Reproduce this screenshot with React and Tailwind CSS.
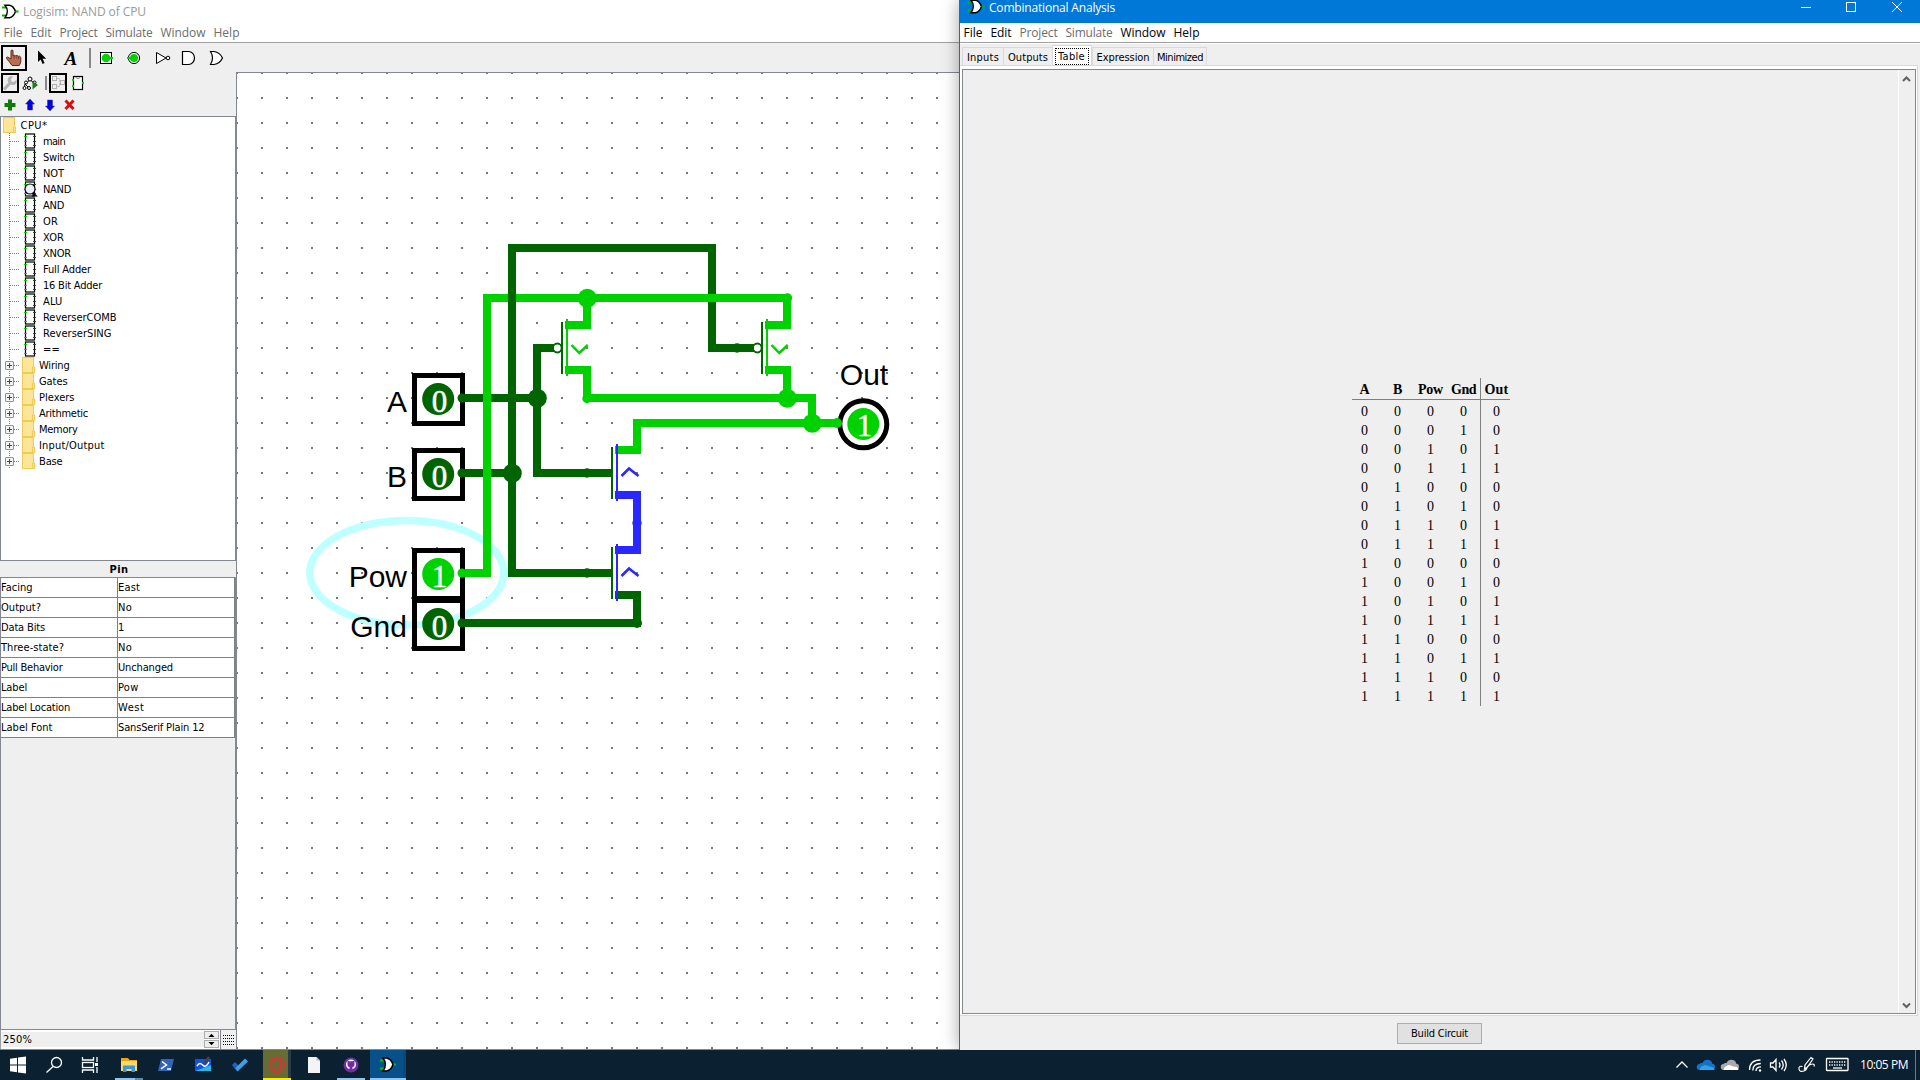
import { useLayoutEffect, useRef } from "react";

const UI = "font-['DejaVu_Sans_Condensed','DejaVu_Sans',sans-serif] text-[11px]";
const SEGOE = "font-['Open_Sans',sans-serif] text-[12px]";

// Text run whose tracking is adjusted so that it spans exactly `w` pixels.
function Fit({ w, children, className = "" }) {
  const ref = useRef(null);
  useLayoutEffect(() => {
    const el = ref.current;
    const apply = () => {
      el.style.letterSpacing = "0px";
      const natural = el.getBoundingClientRect().width;
      el.style.letterSpacing = (w - natural) / String(children).length + "px";
    };
    apply();
    document.fonts?.ready.then(apply);
  }, [w, children]);
  return (
    <span ref={ref} className={"inline-block whitespace-pre " + className}>
      {children}
    </span>
  );
}

const DARK = "#006400";
const LIT = "#00d200";
const BLUE = "#2828ff";

function LogisimIcon() {
  return (
    <svg width="17" height="16" viewBox="0 0 17 16" className="block shrink-0">
      <path d="M0 3.500h5M0 11.500h5" stroke="#00b400" strokeWidth="2" />
      <path d="M3 1.200h4.500c3 0.500 5 3.500 6 6.300c-1 2.800-3 5.800-6 6.300H3c3-4 3-9 0-12.600z" fill="#fff" stroke="#000" strokeWidth="1.500" />
      <path d="M13.500 7.500h3" stroke="#00b400" strokeWidth="2" />
    </svg>
  );
}

const MENU = [["File", 19], ["Edit", 21], ["Project", 38], ["Simulate", 47], ["Window", 45], ["Help", 26]];

function MenuBar({ dim }) {
  return (
    <div className={"flex h-[19px] items-center gap-[8px] pl-[3.500px] " + SEGOE}>
      {MENU.map(([m, w]) => (
        <Fit key={m} w={w} className={dim(m) ? "text-[#6d6d6d]" : "text-black"}>{m}</Fit>
      ))}
    </div>
  );
}

function ToolBar() {
  return (
    <div className="flex h-[29px] items-start bg-[#efefef] pl-px pt-[2px]">
      <div className="flex size-[26px] items-center justify-center border-2 border-black">
        <svg width="18" height="18" viewBox="0 0 18 18">
          <path d="M6 1.500q1-1 2 0V7l1.200-0.800 1.500 0.600 1.200-0.400 1.300 0.900 1.300-0.200 1.300 1.200V13l-1.500 3.500H7L4.500 13 1.500 9.500q-0.500-1.500 1-1.500L6 10z" fill="#b96d50" stroke="#5f2c1a" strokeWidth="1" />
          <path d="M9.200 7v2.500M11.500 7.500v2M13.500 8v2" stroke="#5f2c1a" strokeWidth="0.700" />
        </svg>
      </div>
      <svg width="200" height="26" viewBox="27 45 200 26" className="block">
        <path d="M38 50.500V62l2.600-2.400 2 4.400 2-0.900-2-4.300h3.600z" fill="#000" />
        <text x="64.500" y="65" fontFamily="Liberation Serif" fontSize="19" fontWeight="bold" fontStyle="italic">A</text>
        <path d="M90 48V68" stroke="#888" strokeWidth="2" />
        <rect x="100.500" y="52.500" width="11" height="11" fill="#fff" stroke="#000" />
        <circle cx="106" cy="58" r="4.300" fill={LIT} /><path d="M109 58h4" stroke={LIT} strokeWidth="2" />
        <circle cx="134" cy="58" r="5.600" fill="#fff" stroke="#000" />
        <circle cx="134" cy="58" r="4" fill={LIT} /><path d="M127 58h4" stroke={LIT} strokeWidth="2" />
        <path d="M156.500 52.500V63.500L166 58z" fill="#fff" stroke="#000" />
        <circle cx="168" cy="58" r="1.800" fill="#fff" stroke="#000" />
        <path d="M182.500 51.500h6a6 6.500 0 0 1 0 13h-6z" fill="#fff" stroke="#000" strokeWidth="1.200" />
        <path d="M210.500 51.500h3.500q6 1 8.500 6.500q-2.500 5.500-8.500 6.500h-3.500q4-6.500 0-13z" fill="#fff" stroke="#000" strokeWidth="1.200" />
      </svg>
    </div>
  );
}

function ExplorerBars() {
  return (
    <svg width="236" height="44" viewBox="0 72 236 44" className="block bg-[#efefef]">
      <rect x="2" y="74" width="16" height="18" fill="none" stroke="#000" strokeWidth="2" />
      <path d="M4 89.500L11 82" stroke="#b4b4b4" strokeWidth="3.200" />
      <path d="M13.500 76.500l-2.500 2.500 0.500 2.500 2.500 0.500 2.500-2.500q1 3.500-1.500 5t-5-0.500l-2-2q-1-2.500 0.500-4.500t5-1z" fill="#b4b4b4" />
      <g fill="#fff" stroke="#000">
        <path d="M30 80L25 84L24 89M30 80l6 4M25 84l4 4" fill="none" />
        <circle cx="30" cy="79" r="2" /><circle cx="26" cy="82.500" r="1.500" /><circle cx="34.500" cy="82.500" r="1.500" />
        <circle cx="24.500" cy="88" r="1.500" /><circle cx="29" cy="88" r="1.500" />
      </g>
      <path d="M32.500 81V89.500L38 85z" fill="#1e7d1e" />
      <path d="M46 76V90" stroke="#888" strokeWidth="2" />
      <rect x="50" y="74" width="16" height="18" fill="none" stroke="#000" strokeWidth="2" />
      <g fill="none" stroke="#b0b0b0">
        <rect x="52.500" y="76.500" width="4" height="4" /><rect x="52.500" y="84.500" width="4" height="4" /><rect x="60.500" y="80.500" width="4" height="4" />
      </g>
      <path d="M57 78.500h2.500v3.500M57 86.500h2.500V83" fill="none" stroke="#a4dba4" />
      <rect x="73.500" y="76.500" width="9" height="13" fill="#fff" stroke="#000" strokeWidth="1.200" />
      <path d="M76 77a2 1.500 0 0 0 4 0" fill="none" stroke="#888" />
      <path d="M72 80h2M72 86h2M82 83h2" stroke={LIT} strokeWidth="2" />
      <path d="M8 99.500h4v3.500h3.500v4H12v3.500H8V107H4.500v-4H8z" fill="#0b7d0b" />
      <path d="M30 99l4.500 5H32.500v6h-5v-6H25.500z" fill="#0000e6" stroke="#333a80" strokeWidth="0.500" />
      <path d="M50 111l-4.500-5h2v-6h5v6h2z" fill="#0000e6" stroke="#333a80" strokeWidth="0.500" />
      <path d="M65.500 100.500l8 8.500M73.500 100.500l-8 8.500" stroke="#e00a0a" strokeWidth="3" />
    </svg>
  );
}

function Chip({ viewed }) {
  return (
    <svg width="15" height="16" viewBox="0 0 15 16" className="block shrink-0">
      <rect x="1.500" y="1" width="9" height="14" fill="#fff" stroke="#000" strokeWidth="1.200" />
      <path d="M0 3.500h3M0 8.500h3M0 12.500h3" stroke={LIT} strokeWidth="1" />
      <path d="M9 3.500h3M9 8.500h3M9 12.500h3" stroke="#006400" strokeWidth="1" />
      {viewed && <circle cx="6" cy="8" r="5" fill="#eeeeff" stroke="#000" strokeWidth="1.100" />}
      {viewed && <path d="M9 11L14 15.500H8z" fill="#000" />}
    </svg>
  );
}

function Folder() {
  return (
    <svg width="13" height="16" viewBox="0 0 13 16" className="block shrink-0">
      <rect x="0.500" y="0.500" width="11" height="15" fill="#ffe597" stroke="#eecb55" />
      <path d="M10.500 15.500V10h2v5.500z" fill="#ffe597" stroke="#eecb55" />
    </svg>
  );
}

function Branch({ box }) {
  return (
    <svg width="21" height="16" viewBox="0 0 21 16" className="block shrink-0">
      <path d="M9.500 0V16" stroke="#808080" strokeDasharray="1 1" />
      <path d="M10 8.500H20" stroke="#808080" strokeDasharray="1 1" />
      {box && <rect x="5.500" y="4.500" width="8" height="8" rx="0.500" fill="#f2f2f2" stroke="#919191" />}
      {box && <path d="M7 8.500h5M9.500 6v5" stroke="#2c4a94" />}
    </svg>
  );
}

const CIRCUITS = [["main", 22], ["Switch", 31.5], ["NOT", 21], ["NAND", 28], ["AND", 21], ["OR", 15], ["XOR", 21], ["XNOR", 28],
  ["Full Adder", 48], ["16 Bit Adder", 59], ["ALU", 19.5], ["ReverserCOMB", 73.5], ["ReverserSING", 68.5], ["==", 17]];
const LIBS = [["Wiring", 30.5], ["Gates", 28.5], ["Plexers", 35.5], ["Arithmetic", 49], ["Memory", 38.5], ["Input/Output", 65.5], ["Base", 23.5]];

function Tree() {
  return (
    <div className={"h-[445px] border border-[#828790] bg-white " + UI}>
      <div className="flex h-4 items-center pl-[2px]"><Folder /><Fit w={27} className="ml-[4.500px] pt-[2px]">CPU*</Fit></div>
      {CIRCUITS.map(([n, w]) => (
        <div key={n} className="-ml-px flex h-4 items-center">
          <Branch />
          <div className="ml-[3px] flex"><Chip viewed={n === "NAND"} /></div>
          <Fit w={w} className="ml-[4px] pt-[2px]">{n}</Fit>
        </div>
      ))}
      {LIBS.map(([n, w]) => (
        <div key={n} className="-ml-px flex h-4 items-center">
          <Branch box />
          <div className="ml-[1px]"><Folder /></div>
          <Fit w={w} className="ml-[4px] pt-[2px]">{n}</Fit>
        </div>
      ))}
    </div>
  );
}

const ATTRS = [["Facing", 31.5, "East", 22], ["Output?", 40, "No", 14], ["Data Bits", 44, "1", 7], ["Three-state?", 63, "No", 14],
  ["Pull Behavior", 61.5, "Unchanged", 55], ["Label", 26, "Pow", 20.5], ["Label Location", 69, "West", 26.5], ["Label Font", 51.5, "SansSerif Plain 12", 86.5]];

function Attributes() {
  return (
    <div className={UI}>
      <div className="flex h-4 items-center justify-center pt-[2px] pl-[2px] font-bold"><Fit w={19}>Pin</Fit></div>
      <div className="h-[453px] border border-[#828790] bg-[#efefef]">
        {ATTRS.map(([k, kw, v, vw]) => (
          <div key={k} className="flex h-5 items-start border-b border-r border-[#808080] bg-white">
            <div className="flex h-[19px] w-[117px] items-center border-r border-[#808080] pt-[2px]"><Fit w={kw}>{k}</Fit></div>
            <div className="flex h-[19px] items-center pt-[2px]"><Fit w={vw}>{v}</Fit></div>
          </div>
        ))}
      </div>
    </div>
  );
}

function ZoomBar() {
  return (
    <div className={"flex h-[19px] items-center border-l border-[#a0a0a0] bg-[#efefef] " + UI}>
      <div className="flex h-full w-[203px] shrink-0 items-center border-y-2 border-white pt-[2px] pl-[2px]"><Fit w={29}>250%</Fit></div>
      <svg width="32" height="19" viewBox="204 1030 32 19" className="block shrink-0">
        <rect x="204" y="1030" width="16" height="19" fill="#fff" />
        <rect x="204.500" y="1031.500" width="14" height="7" fill="#eee" stroke="#acacac" />
        <rect x="204.500" y="1040.500" width="14" height="7" fill="#eee" stroke="#acacac" />
        <path d="M208.500 1037h6l-3-3.200zM208.500 1042h6l-3 3.200z" fill="#000" />
        <path d="M220.500 1030V1049" stroke="#828790" />
        {[0, 1, 2, 3].map((r) => (
          <path key={r} d={`M223 ${1035.5 + r * 3}H234`} stroke="#000" strokeDasharray="1 1" />
        ))}
      </svg>
    </div>
  );
}

function Pin({ y, bit, label }) {
  return (
    <g>
      <rect x="414.500" y={y - 22.5} width="48" height="48" fill="none" stroke="#000" strokeWidth="5" />
      <circle cx="438.200" cy={y + 1} r="16" fill={bit ? LIT : DARK} />
      <text x="439.500" y={y + 13.5} textAnchor="middle" fontFamily="Liberation Serif" fontSize="31" fill="#fff" stroke="#fff" strokeWidth="0.500">{bit}</text>
      <circle cx="462" cy={y} r="4.500" fill={bit ? LIT : DARK} />
      <text x="407" y={y + 14} textAnchor="end" fontFamily="Liberation Sans" fontSize="30">{label}</text>
    </g>
  );
}

function PType({ dx }) {
  return (
    <g transform={`translate(${dx} 0)`} fill="none">
      <path d="M565 325H587V298M565 370H587V398" stroke={LIT} strokeWidth="8" />
      <path d="M562 322V374" stroke={DARK} strokeWidth="2" />
      <path d="M567 319V376" stroke={LIT} strokeWidth="2" />
      <circle cx="557.300" cy="348" r="4.400" fill="#fff" stroke={DARK} strokeWidth="2" />
      <path d="M571.500 345l7.800 8 8.500-8" stroke={LIT} strokeWidth="2.500" />
    </g>
  );
}

function NType({ dy }) {
  return (
    <g transform={`translate(0 ${dy})`} fill="none" strokeWidth="2">
      <path d="M612 447V499" stroke={DARK} />
      <path d="M617 444V501" stroke={BLUE} />
      <path d="M621.500 476l7.500-7.500 9.500 7.500" stroke={BLUE} strokeWidth="2.500" />
    </g>
  );
}

function Canvas() {
  return (
    <svg width="722" height="976" viewBox="237 73 722 976" className="block bg-white">
      <defs>
        <pattern id="grid" x="236" y="72" width="25" height="25" patternUnits="userSpaceOnUse">
          <rect width="2" height="2" fill="#777" />
        </pattern>
      </defs>
      <rect x="237" y="73" width="722" height="976" fill="url(#grid)" />
      <ellipse cx="406.800" cy="572.700" rx="97" ry="52.300" fill="none" stroke="#beffff" strokeWidth="7.500" />
      <g fill="none" stroke={DARK} strokeWidth="8">
        <path d="M462 398H537M554 348H537V473H612M462 473H512M712 298V348H754" />
        <path d="M615 595H637V623H462" />
      </g>
      <path d="M462 573H487V298H787" fill="none" stroke={LIT} strokeWidth="8" />
      <path d="M612 573H512V248H712V300" fill="none" stroke={DARK} strokeWidth="8" />
      <path d="M587 298H787M587 398H812V423M615 450H637V423H841" fill="none" stroke={LIT} strokeWidth="8" />
      <path d="M615 495H637V550H615" fill="none" stroke={BLUE} strokeWidth="8" />
      <PType dx={0} />
      <PType dx={200} />
      <NType dy={0} />
      <NType dy={100} />
      <g fill={DARK}>
        <circle cx="537.300" cy="398.300" r="9.500" /><circle cx="512.300" cy="473.300" r="9.500" />
        <circle cx="587" cy="473" r="4.700" /><circle cx="587" cy="573" r="4.700" /><circle cx="637" cy="623" r="5" />
        <circle cx="737" cy="348" r="4.700" />
      </g>
      <g fill={LIT}>
        <circle cx="587.300" cy="298.300" r="9.500" /><circle cx="787.300" cy="398.300" r="9.500" /><circle cx="812.300" cy="423.300" r="9.500" />
        <circle cx="787.500" cy="298" r="4.700" /><circle cx="587" cy="398.500" r="4.700" />
      </g>
      <circle cx="637" cy="523" r="4.700" fill={BLUE} />
      <Pin y={398} bit={0} label="A" />
      <Pin y={473} bit={0} label="B" />
      <Pin y={573} bit={1} label="Pow" />
      <Pin y={623} bit={0} label="Gnd" />
      <circle cx="863.300" cy="424.300" r="23.500" fill="none" stroke="#000" strokeWidth="5" />
      <circle cx="837" cy="423" r="5" fill={LIT} />
      <circle cx="863.300" cy="424" r="16" fill={LIT} />
      <text x="864.500" y="436" textAnchor="middle" fontFamily="Liberation Serif" fontSize="31" fill="#fff" stroke="#fff" strokeWidth="0.500">1</text>
      <text x="864" y="385" textAnchor="middle" fontFamily="Liberation Sans" fontSize="30">Out</text>
    </svg>
  );
}

function MainWindow() {
  return (
    <div className="h-[1050px] w-[959px] shrink-0 bg-white">
      <div className={"flex h-[23px] items-center pl-[2px] text-[#999] " + SEGOE}>
        <LogisimIcon /><Fit w={123} className="ml-[4px]">Logisim: NAND of CPU</Fit>
      </div>
      <div className="h-[19px]"><MenuBar dim={() => true} /></div>
      <div className="border-t border-[#a0a0a0]"><ToolBar /></div>
      <div className="flex h-[977px]">
        <div className="w-[236px] bg-[#efefef]">
          <ExplorerBars />
          <Tree />
          <Attributes />
          <ZoomBar />
        </div>
        <div className="border-l border-t border-[#828790]"><Canvas /></div>
      </div>
      <div className="h-px bg-[#828790]" />
    </div>
  );
}

const TABS = [["Inputs", 32, "w-[41px]"], ["Outputs", 40, "w-[49px]"], ["Table", 27, ""], ["Expression", 53, "w-[61px]"], ["Minimized", 46, "w-[54px]"]];

const OUTPUTS = "0011001100110101";
const ROWS = Array.from({ length: 16 }, (_, i) => i.toString(2).padStart(4, "0") + OUTPUTS[i]);
const COLS = [["A", 10, "w-[29px] pr-[4px]"], ["B", 9, "w-[33px]"], ["Pow", 25, "w-[33px]"], ["Gnd", 25, "w-[33px]"], ["Out", 24, "w-[29px] pl-[2px]"]];

function TruthColumn({ index }) {
  const [name, w, cls] = COLS[index];
  return (
    <div>
      <div className={"flex h-[21px] items-center justify-center pt-px font-bold " + cls}><Fit w={w}>{name}</Fit></div>
      <div className="mb-[2px] h-px bg-[#808080]" />
      {ROWS.map((r, k) => (
        <div key={k} className={"h-[19px] text-center leading-[19px] " + cls}>{r[index]}</div>
      ))}
    </div>
  );
}

function TruthTable() {
  return (
    <div className="ml-[389px] mt-[308px] flex font-['Liberation_Serif',serif] text-[14px]">
      {[0, 1, 2, 3].map((i) => <TruthColumn key={i} index={i} />)}
      <div className="w-px bg-[#808080]" />
      <TruthColumn index={4} />
    </div>
  );
}

function AnalysisWindow() {
  return (
    <div className="relative z-10 h-[1050px] w-[961px] shrink-0 border-l border-[#0078d7] bg-[#efefef] shadow-[0_0_16px_rgba(0,0,0,0.35)]">
      <div className={"flex h-[23px] items-start bg-[#0078d7] pl-[8px] text-white " + SEGOE}>
        <div className="-mt-px"><LogisimIcon /></div>
        <Fit w={126} className="ml-[4px] leading-[16px]">Combinational Analysis</Fit>
        <svg width="110" height="15" viewBox="1798 0 110 15" className="ml-auto mr-[12px] block" fill="none" stroke="#fff">
          <path d="M1801 7.500h10M1892 2l10 10M1902 2l-10 10" />
          <rect x="1846.500" y="2.500" width="9" height="9" />
        </svg>
      </div>
      <div className="h-[19px] bg-white"><MenuBar dim={(m) => m === "Project" || m === "Simulate"} /></div>
      <div className="h-[2px] border-b border-t border-b-white border-t-[#a0a0a0]" />
      <div className={"flex h-[21px] items-end pl-[2px] " + UI}>
        {TABS.map(([t, w, cls]) => t === "Table" ? (
          <div key={t} className="flex h-[20px] w-[40px] justify-center border border-b-0 border-[#d9d9d9] bg-white pt-[2px]">
            <div className="flex h-[17px] w-[34px] shrink-0 items-center justify-center border border-dotted border-black leading-none"><Fit w={w} className="-mt-px -ml-px">{t}</Fit></div>
          </div>
        ) : (
          <div key={t} className={"flex h-[18px] items-center justify-center border border-r-0 border-b-0 border-[#d9d9d9] pt-[3px] last:border-r " + cls}><Fit w={w}>{t}</Fit></div>
        ))}
      </div>
      <div className="mr-[2px] h-[951px] border border-l-0 border-[#d9d9d9] bg-white pr-px pl-[2px] pt-[3px] pb-px">
        <div className="flex h-full border border-[#828790] bg-[#efefef]">
          <div className="flex-1 border-r border-white"><TruthTable /></div>
          <svg width="16" height="943" viewBox="0 0 16 943" className="block" fill="none" stroke="#606060" strokeWidth="2">
            <path d="M4 11l3.500-3.500L11 11M4 933.500l3.500 3.500L11 933.500" />
          </svg>
        </div>
      </div>
      <div className={"flex justify-center pt-[7px] pr-px " + UI}>
        <div className="flex h-[21px] w-[85px] items-center justify-center border border-[#adadad] bg-[#e1e1e1] pt-px"><Fit w={57}>Build Circuit</Fit></div>
      </div>
    </div>
  );
}

function Taskbar() {
  return (
    <div className="flex h-[30px] items-center justify-between bg-[#0b2031]">
      <svg width="420" height="30" viewBox="0 0 420 30" className="block">
        <path d="M10 8.800l7-1v6.700H10zM18 7.600l8-1.100v8H18zM10 15.500h7v6.700l-7-1zM18 15.500h8v8l-8-1.100z" fill="#fff" />
        <g fill="none" stroke="#fff" strokeWidth="1.300">
          <circle cx="56.500" cy="12.500" r="5" /><path d="M53 16.500L46.500 22.500" />
          <path d="M82.500 7v3h11V7M82.500 23v-3h11v3" /><rect x="82.500" y="12.500" width="11" height="5" />
          <path d="M97 7v5M97 17v6" />
        </g>
        <rect x="95" y="13" width="3" height="3" fill="#fff" />
        <path d="M121 8h7l1.500 2H137v11H121z" fill="#e8a613" /><path d="M121 11h16v10H121z" fill="#ffd764" />
        <path d="M123 22v-6.500h12V22h-3.500v-3h-5v3z" fill="#3a96dd" />
        <path d="M115 28h20v2h-20z" fill="#8ec5ef" /><path d="M135 28h8v2h-8z" fill="#5d8dac" />
        <path d="M161 9h13l-3 12h-13z" fill="#3264b8" /><path d="M162 11.500l4.500 3.500-5.500 3.800M167 19h4" fill="none" stroke="#fff" strokeWidth="1.500" />
        <path d="M195 9h16v12h-16z" fill="#1550e0" /><path d="M195 21l16-6v6z" fill="#22b8ea" />
        <path d="M197 16c3-5 5-1 7 0s4-2 5-4" fill="none" stroke="#fff" strokeWidth="1.500" /><path d="M204 14l5-7" stroke="#444" strokeWidth="2.500" />
        <path d="M232 15l3-3 4 4-2.500 5z" fill="#1f5fbe" /><path d="M235.500 18l9.500-9.500 3 3L237.500 21.500z" fill="#3fa0ea" />
        <path d="M263 0h25v28h-25z" fill="#676c33" /><path d="M288 0h3v28h-3z" fill="#263c48" /><path d="M263 28h28v2h-28z" fill="#ffee00" />
        <ellipse cx="277" cy="15" rx="7.500" ry="7.500" fill="none" stroke="#d8333f" strokeWidth="1.500" />
        <ellipse cx="277" cy="15" rx="3.500" ry="7" fill="none" stroke="#d8333f" strokeWidth="1.500" />
        <path d="M308 7h8.500l3.500 3.500V23h-12z" fill="#f4f4f4" /><path d="M316.500 7v3.500H320z" fill="#b5b5b5" />
        <circle cx="351" cy="15" r="7.500" fill="#6f2fa0" /><circle cx="351" cy="14.500" r="5" fill="#fff" />
        <path d="M347.500 10.500l2 0.800h3l2-0.800v4.500q0 2-2 2v4.500h-3V17q-2 0-2-2z" fill="#6f2fa0" />
        <path d="M337 28h28v2h-28z" fill="#8ec5ef" />
        <path d="M370 0h33v30h-33z" fill="#07508a" /><path d="M403 0h3v30h-3z" fill="#0d4878" /><path d="M370 28h36v2h-36z" fill="#8ec5ef" />
        <path d="M380 10.500h4M380 18.500h4M393 14.500h3" stroke="#00c800" strokeWidth="2" />
        <path d="M383 8h3.500c3 0.500 5.500 3.500 6.500 6.500c-1 3-3.500 6-6.500 6.500H383c3-4 3-9 0-13z" fill="#fff" stroke="#000" strokeWidth="1.500" />
      </svg>
      <div className="flex h-full items-center">
        <svg width="178" height="30" viewBox="1672 1050 178 30" className="block" fill="none" stroke="#fff" strokeWidth="1.300">
          <path d="M1676.500 1067.500l5.500-5.500 5.500 5.500" />
          <path d="M1700 1070a3 3 0 0 1-0.500-6q1-1.500 3-1q2-4 6.500-3q3 0.800 3 3.500q3.500 0.500 3 4q-0.500 2.500-3 2.500z" fill="#1473c9" stroke="none" />
          <path d="M1699.500 1070q1-4.500 6-5l4 1.500q5 0 5 3.500z" fill="#2fa3ea" stroke="none" />
          <path d="M1724 1070a3 3 0 0 1-0.500-6q1-1.500 3-1q2-4 6.500-3q3 0.800 3 3.500q3.500 0.500 3 4q-0.500 2.500-3 2.500z" fill="#a9a9a9" stroke="none" />
          <path d="M1723.500 1070q1-4.500 6-5l4 1.500q5 0 5 3.500z" fill="#fff" stroke="none" />
          <path d="M1749.500 1070q0-10 11-10M1752.800 1070.500q0-7 8-7M1756 1071q0-4.200 5-4.200" />
          <circle cx="1760" cy="1070.500" r="1.200" fill="#fff" stroke="none" />
          <path d="M1770.500 1063v4h2.500l3 3.500v-11l-3 3.500zM1779 1062.500q2 2.500 0 5M1781.500 1060.500q3.500 4.500 0 9M1784 1059q4.500 6 0 12" />
          <path d="M1802.500 1066.500q-4-1-3.500 2.500t5 2q3-1 3-4M1804.500 1069l0.500-4 6-7.500 2 1.500-5.500 8zM1807 1067q3-3 5.500-3t1.500 2.500" strokeWidth="1.200" />
          <rect x="1826.500" y="1058.500" width="21.500" height="12" rx="0.500" />
          <path d="M1829 1062h17M1829 1065h17" strokeDasharray="1.300 1.200" /><path d="M1833 1068h9" />
        </svg>
        <div className={"ml-[10px] text-white " + SEGOE}><Fit w={48}>10:05 PM</Fit></div>
        <div className="ml-[7px] mr-[4px] h-full w-px bg-[#6d7a84]" />
      </div>
    </div>
  );
}

export default function App() {
  return (
    <div className="h-[1080px] w-[1920px] overflow-hidden bg-white text-black">
      <div className="flex h-[1050px] overflow-hidden">
        <MainWindow />
        <AnalysisWindow />
      </div>
      <Taskbar />
    </div>
  );
}
